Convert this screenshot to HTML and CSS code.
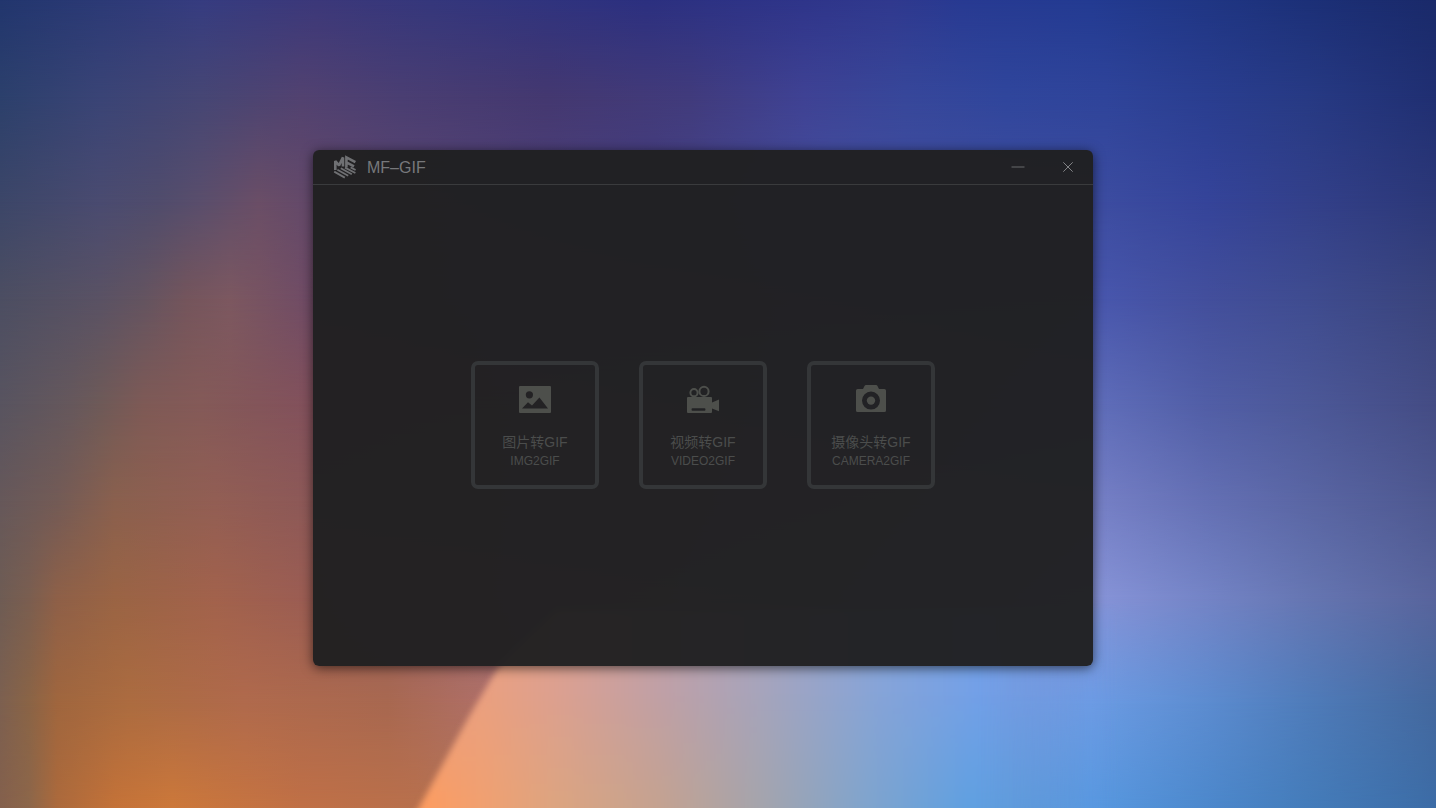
FILE: index.html
```html
<!DOCTYPE html>
<html lang="zh-CN">
<head>
<meta charset="utf-8">
<meta name="viewport" content="width=device-width, initial-scale=1">
<title>MF–GIF</title>
<link rel="stylesheet" href="styles.css">
</head>
<body>
<div class="wallpaper" aria-hidden="true">
  <div class="band band-0"></div>
  <div class="band band-1"></div>
  <div class="band band-2"></div>
  <div class="band band-3"></div>
  <div class="band band-4"></div>
  <div class="band band-5"></div>
  <div class="band band-6"></div>
  <div class="band band-7"></div>
  <div class="band band-8"></div>
  <div class="flare">
    <div class="flare-shape">
      <div class="band flare-top"></div>
      <div class="band flare-bottom"></div>
    </div>
  </div>
</div>

<main class="window">
  <header class="titlebar">
    <svg class="logo" viewBox="0 0 24 24" aria-hidden="true">
      <g fill="none" stroke="currentColor">
        <path stroke-width="2.6" stroke-linejoin="bevel" d="M2.3 15V6L6 10.4L10 2.4V11.6"/>
        <path stroke-width="2.6" d="M13.4 12.4V2.4L22.4 7.2M13.4 7.4L21 11.4"/>
        <path stroke-width="1.8" d="M1.2 16.6L11.8 22.6M4.4 14.8L15.2 20.8M7.8 13.2L18.8 19.2M12 12.6L22.4 18M17.6 12.4L22.6 15"/>
      </g>
    </svg>
    <h1 class="title">MF–GIF</h1>
    <div class="controls">
      <button class="control control-min" type="button" aria-label="最小化">
        <svg viewBox="0 0 14 14" aria-hidden="true"><path d="M0.5 7H13.5"/></svg>
      </button>
      <button class="control" type="button" aria-label="关闭">
        <svg viewBox="0 0 14 14" aria-hidden="true"><path d="M2.3 2.3L11.7 11.7M11.7 2.3L2.3 11.7"/></svg>
      </button>
    </div>
  </header>

  <section class="modes">
    <button class="card" type="button">
      <svg class="icon" viewBox="0 0 32 32" aria-hidden="true">
        <path fill-rule="evenodd" d="M1 2H31Q32 2 32 3V28Q32 29 31 29H1Q0 29 0 28V3Q0 2 1 2ZM10.4 7.2A3.6 3.6 0 1 0 10.4 14.4A3.6 3.6 0 1 0 10.4 7.2ZM3 24.6H29L20.4 13.6L13 21.6L9 18.2Z"/>
      </svg>
      <span class="name">图片转GIF</span>
      <span class="code">IMG2GIF</span>
    </button>
    <button class="card" type="button">
      <svg class="icon" viewBox="0 0 32 32" aria-hidden="true">
        <circle class="reel" cx="7" cy="8.7" r="3.6"/>
        <circle class="reel" cx="17" cy="7.4" r="4.6"/>
        <path fill-rule="evenodd" d="M1 13H24Q25 13 25 14V18.4L32 15.4V27.2L25 24.4V28Q25 29 24 29H1Q0 29 0 28V14Q0 13 1 13ZM5.4 24.2Q4.6 24.2 4.6 25V26Q4.6 26.8 5.4 26.8H17.6Q18.4 26.8 18.4 26V25Q18.4 24.2 17.6 24.2Z"/>
      </svg>
      <span class="name">视频转GIF</span>
      <span class="code">VIDEO2GIF</span>
    </button>
    <button class="card" type="button">
      <svg class="icon" viewBox="0 0 32 32" aria-hidden="true">
        <path fill-rule="evenodd" d="M11 1H21Q22 1 22.5 2L24 5H29.4Q31 5 31 6.6V26.4Q31 28 29.4 28H2.6Q1 28 1 26.4V6.6Q1 5 2.6 5H8L9.5 2Q10 1 11 1ZM16 7.6A9 9 0 1 0 16 25.6A9 9 0 1 0 16 7.6Z"/>
        <circle cx="16" cy="16.6" r="4.2"/>
      </svg>
      <span class="name">摄像头转GIF</span>
      <span class="code">CAMERA2GIF</span>
    </button>
  </section>
</main>
</body>
</html>
```
FILE: styles.css
```css
* {
  box-sizing: border-box;
}

body {
  margin: 0;
  min-height: 100vh;
  overflow: hidden;
  background: #2f4496;
  color: #4b4d4c;
  font-family: "Liberation Sans", "Noto Sans CJK SC", sans-serif;
}

button {
  margin: 0;
  padding: 0;
  border: 0;
  background: none;
  color: inherit;
  font: inherit;
  cursor: pointer;
}

/* Wallpaper: horizontal colour bands, each fading in over the one above */
.wallpaper,
.band,
.flare,
.flare-shape {
  position: absolute;
  inset: 0;
}

.wallpaper {
  overflow: hidden;
}

.band {
  mask-image: linear-gradient(to bottom, transparent var(--from), #000 var(--to));
}

.band-0 {
  --from: -2%;
  --to: -1%;
  background: linear-gradient(to right, #22366e 0%, #2c3a76 7%, #363c80 14%, #3c387a 22%, #35377c 30%, #2c3080 45%, #2f358a 56%, #30398e 62%, #283a92 67%, #233b92 76%, #203684 84%, #1c3078 91%, #1a2a6a 100%);
}

.band-1 {
  --from: 0%;
  --to: 12%;
  background: linear-gradient(to right, #2c406c 0%, #3a4476 7%, #464674 14%, #524270 21%, #4a3e72 28%, #443870 38%, #413b7c 48%, #3f4294 56%, #37479a 63%, #30469c 70%, #2f449a 77%, #2a3e90 84%, #273a84 91%, #202f72 100%);
}

.band-2 {
  --from: 12%;
  --to: 25%;
  background: linear-gradient(to right, #3c4668 0%, #4a4b70 7%, #504c6c 11%, #5a4e6c 14%, #6a4e66 18%, #62486a 22%, #463e80 45%, #4550a0 58%, #3c4ca0 77%, #35449a 84%, #33408a 91%, #2c3878 100%);
}

.band-3 {
  --from: 25%;
  --to: 37%;
  background: linear-gradient(to right, #4c4e62 0%, #5a5264 7%, #645460 10%, #74555c 13%, #7c5860 16%, #6e4a66 22%, #4856ac 77%, #434f9c 84%, #3f4c90 91%, #3a447c 100%);
}

.band-4 {
  --from: 37%;
  --to: 50%;
  background: linear-gradient(to right, #585460 0%, #66585c 5%, #6e5a58 7%, #7e5a56 10%, #845a58 14%, #82505c 22%, #5e6cb8 77%, #515ea6 84%, #4c5898 91%, #444c84 100%);
}

.band-5 {
  --from: 50%;
  --to: 62%;
  background: linear-gradient(to right, #66585a 0%, #735b56 4%, #8a604e 8%, #925e54 15%, #8c5858 22%, #747ec4 77%, #6470b4 84%, #5a66a4 91%, #4e5890 100%);
}

.band-6 {
  --from: 62%;
  --to: 74%;
  background: linear-gradient(to right, #6e5c54 0%, #7a5e50 2%, #8e6048 4%, #9a6444 8%, #a2624c 15%, #9a5c54 22%, #8592d6 77%, #7484c6 84%, #6676b2 91%, #58649c 100%);
}

.band-7 {
  --from: 74%;
  --to: 87%;
  background: linear-gradient(to right, #7c6050 0%, #8a6446 2%, #a0663e 4%, #ac6c40 9%, #b06a4c 17%, #a86850 27%, #b07068 34%, #6c9ce4 76%, #5c8cd0 84%, #4f7cba 91%, #44689e 100%);
}

.band-8 {
  --from: 87%;
  --to: 100%;
  background: linear-gradient(to right, #84604c 0%, #8c664a 2%, #ac6a3c 4%, #c47238 8%, #cc783a 12%, #c07046 21%, #b8704c 29%, #5898e0 76%, #4c88cc 84%, #447cba 91%, #3c6ca6 100%);
}

/* Bright lower area with its slanted left edge */
.flare {
  filter: blur(3px);
  mask-image: linear-gradient(to right, #000 68%, transparent 78%);
}

.flare-shape {
  inset: 0 -2% -2% 0;
  clip-path: polygon(38% 74%, 34% 81%, 32% 87%, 28% 100%, 100% 100%, 100% 74%);
}

.flare-top {
  --from: -2%;
  --to: -1%;
  background: linear-gradient(to right, #eaa080 33%, #dca090 38%, #c0a0a6 45%, #a6a4bc 52%, #86a4d8 60%, #72a0e8 67%, #7098e6 76%);
}

.flare-bottom {
  --from: 84%;
  --to: 98%;
  background: linear-gradient(to right, #fc9c60 29%, #f0a070 33%, #dca480 38%, #c4a290 45%, #a4a4ac 52%, #80a4cc 59%, #60a0e0 66%, #5898e0 76%);
}

/* Application window */
.window {
  position: absolute;
  top: 150px;
  left: 313px;
  display: flex;
  flex-direction: column;
  width: 780px;
  height: 516px;
  border-radius: 6px;
  background: rgba(32, 32, 33, 0.97);
  box-shadow: 0 2px 12px rgba(0, 0, 0, 0.6);
  overflow: hidden;
}

.titlebar {
  display: flex;
  align-items: center;
  height: 35px;
  padding: 0 18px 0 20px;
  border-bottom: 1px solid #3a3b3d;
}

.logo {
  width: 24px;
  height: 24px;
  color: #6f7073;
}

.title {
  margin: 0 0 0 10px;
  padding-top: 2px;
  color: #77787b;
  font-size: 16px;
  font-weight: 400;
  line-height: 24px;
}

.controls {
  display: flex;
  gap: 36px;
  margin-left: auto;
}

.control {
  display: flex;
  width: 14px;
  height: 14px;
  color: #828386;
}

.control-min {
  color: #444548;
}

.control svg {
  width: 14px;
  height: 14px;
  fill: none;
  stroke: currentColor;
  stroke-width: 1;
}

.control-min svg {
  stroke-width: 2;
}

.modes {
  display: flex;
  flex: 1;
  align-items: center;
  justify-content: center;
  gap: 40px;
  padding-bottom: 1px;
}

.card {
  display: flex;
  flex-direction: column;
  align-items: center;
  justify-content: flex-start;
  width: 128px;
  height: 128px;
  padding-top: 19px;
  border: 4px solid #343638;
  border-radius: 7px;
}

.icon {
  width: 32px;
  height: 32px;
  margin-bottom: 16px;
  fill: #4d4f4b;
}

.reel {
  fill: none;
  stroke: #4d4f4b;
  stroke-width: 2;
}

.name {
  font-size: 14px;
  line-height: 20px;
}

.code {
  font-size: 12px;
  line-height: 18px;
}
```
